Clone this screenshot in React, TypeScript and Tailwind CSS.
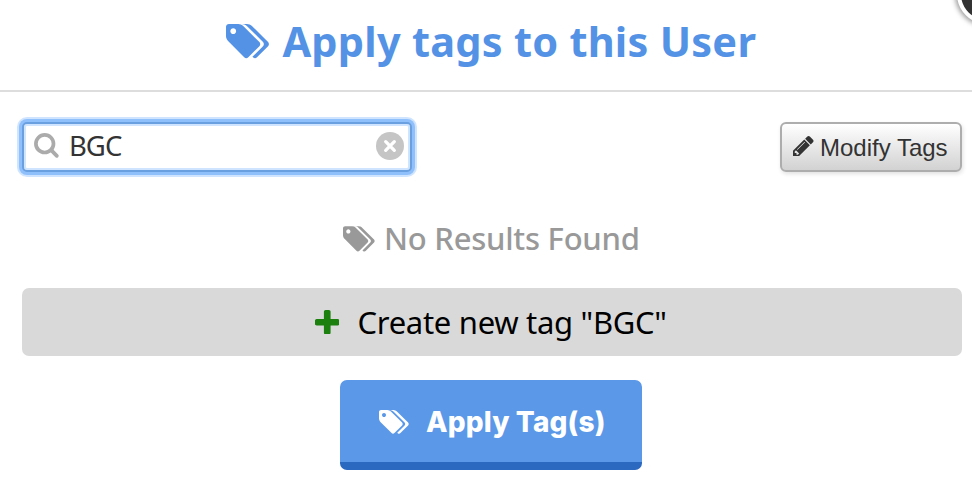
import React from "react";

const humanist = "font-['Noto_Sans','Open_Sans',sans-serif]";

function TagsIcon({ className }: { className: string }) {
  return (
    <svg viewBox="0 0 1920 1792" fill="currentColor" className={`shrink-0 ${className}`} aria-hidden="true">
      <path d="M448 448q0-53-37.5-90.5t-90.5-37.5-90.5 37.5-37.5 90.5 37.5 90.5 90.5 37.5 90.5-37.5 37.5-90.5zm1067 576q0 53-37 90l-491 492q-39 37-91 37-53 0-90-37l-715-716q-38-37-64.5-101t-26.5-117v-416q0-52 38-90t90-38h416q53 0 117 26.5t102 64.5l715 714q37 39 37 91zm384 0q0 53-37 90l-491 492q-39 37-91 37-36 0-59-14t-53-45l470-470q37-37 37-90 0-52-37-91l-715-714q-38-38-102-64.5t-117-26.5h224q53 0 117 26.5t102 64.5l715 714q37 39 37 91z" />
    </svg>
  );
}

function SearchIcon() {
  return (
    <svg viewBox="0 0 26 26" className="size-[26px] shrink-0" fill="none" stroke="#ababab" aria-hidden="true">
      <circle cx="10.7" cy="10.7" r="8.8" strokeWidth="3.7" />
      <path d="M17.2 17.2 L22.8 22.8" strokeWidth="3.8" strokeLinecap="round" />
    </svg>
  );
}

function ClearIcon() {
  return (
    <svg viewBox="0 0 28 28" className="size-7 shrink-0" aria-hidden="true">
      <circle cx="14" cy="14" r="14" fill="#c5c5c5" />
      <path d="M9.7 9.7 L18.3 18.3 M18.3 9.7 L9.7 18.3" stroke="#fff" strokeWidth="3.3" strokeLinecap="round" />
    </svg>
  );
}

function PencilIcon() {
  return (
    <svg viewBox="128 149 1515 1515" fill="currentColor" className="mb-[2px] size-[20.5px] shrink-0" aria-hidden="true">
      <path d="M491 1536l91-91-235-235-91 91v107h128v128h107zm523-928q0-22-22-22-10 0-17 7l-542 542q-7 7-7 17 0 22 22 22 10 0 17-7l542-542q7-7 7-17zm-54-192l416 416-832 832h-416v-416zm683 96q0 53-37 90l-166 166-416-416 166-165q36-38 90-38 53 0 91 38l235 234q37 39 37 91z" />
    </svg>
  );
}

function PlusIcon() {
  return (
    <svg viewBox="192 128 1408 1408" fill="currentColor" className="size-[24.5px] shrink-0 text-[#1b800e]" aria-hidden="true">
      <path d="M1600 736v192q0 40-28 68t-68 28h-416v416q0 40-28 68t-68 28h-192q-40 0-68-28t-28-68v-416h-416q-40 0-68-28t-28-68v-192q0-40 28-68t68-28h416v-416q0-40 28-68t68-28h192q40 0 68 28t28 68v416h416q40 0 68 28t28 68z" />
    </svg>
  );
}

export default function App() {
  return (
    <div className={`relative h-[480px] w-[972px] overflow-hidden bg-white ${humanist}`}>
      <header className="flex h-[92px] items-start border-b-2 border-[#dddddd] pl-[226px] pt-[21px] text-[#5492e6]">
        <TagsIcon className="h-[40.5px] w-[43.4px]" />
        <h1 className="-mt-px ml-[13px] whitespace-nowrap text-[41.5px] font-bold leading-[42px] tracking-[0.25px]">
          Apply tags to this User
        </h1>
      </header>

      <div className="flex items-start justify-between pl-[22px] pr-[10px] pt-[30px]">
        <div className="flex h-[50px] w-[390px] items-center rounded-[5px] border-2 border-[#6aa0e0] bg-white pb-[2px] pl-[10px] pr-[6px] shadow-[0_0_0_3px_#8fc0fb,0_0_0_5px_#cfe4fe,inset_0_0_0_2px_#cfe4fe]">
          <SearchIcon />
          <input
            className="ml-[9px] min-w-0 flex-1 bg-transparent text-[27.5px] leading-[34px] tracking-[-1px] text-[#333] outline-none"
            defaultValue="BGC"
          />
          <ClearIcon />
        </div>
        <button className="flex h-[50px] w-[182px] items-center rounded-[6px] border-2 border-[#adadad] bg-linear-to-b from-white to-[#d2d2d2] pl-[11px] font-['Liberation_Sans',Arial,sans-serif] text-[24px] text-[#333] shadow-[1px_2px_4px_rgba(0,0,0,0.12)]">
          <PencilIcon />
          <span className="ml-[6.5px] mt-[2px] whitespace-nowrap">Modify Tags</span>
        </button>
      </div>

      <div className="flex h-[116px] items-start pl-[343px] pt-[51px] text-[#999]">
        <TagsIcon className="mt-px h-[29.9px] w-8" />
        <p className="-mt-px ml-[9px] whitespace-nowrap text-[31px] font-medium leading-[32px] tracking-[-0.25px]">
          No Results Found
        </p>
      </div>

      <button className="ml-[22px] flex h-[68px] w-[940px] items-center rounded-[7px] bg-[#d9d9d9] pl-[292.5px] text-black">
        <PlusIcon />
        <span className="-mt-px ml-[18.5px] whitespace-nowrap text-[31px] leading-[34px] tracking-[-0.3px]">
          Create new tag "BGC"
        </span>
      </button>

      <button className="ml-[340px] mt-6 flex h-[90px] w-[302px] items-center rounded-[7px] border-b-8 border-[#2b68c0] bg-[#5b98e8] pl-[39px] pt-[2px] font-['Inter',sans-serif] text-white">
        <TagsIcon className="h-[28px] w-[30px]" />
        <span className="ml-[17px] whitespace-nowrap text-[28px] font-extrabold leading-[34px] tracking-[0.15px]">
          Apply Tag(s)
        </span>
      </button>

      <div className="absolute -top-[36px] left-[957px] size-[60px] rounded-full border-4 border-white bg-[#333] shadow-[0_0_5px_2px_rgba(0,0,0,0.4)]" />
    </div>
  );
}
